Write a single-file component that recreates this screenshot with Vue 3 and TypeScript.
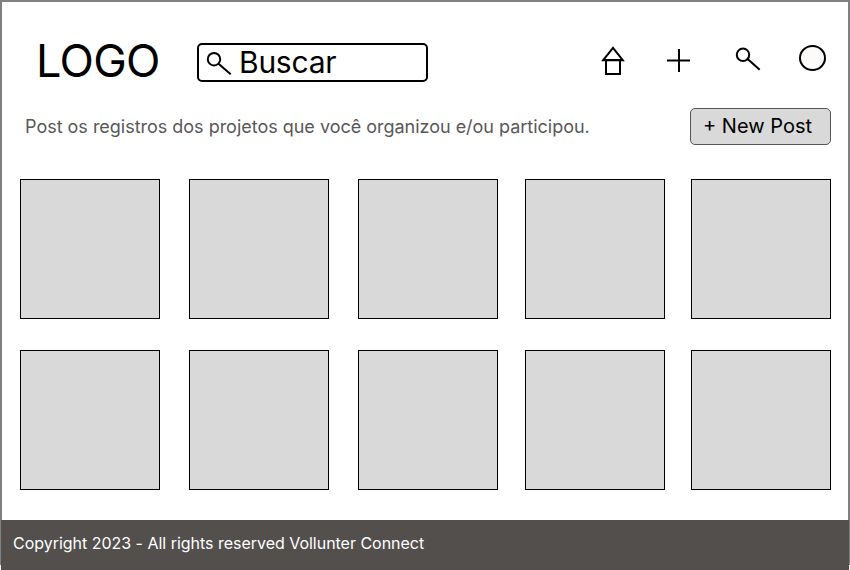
<script setup lang="ts">
interface Post {
  id: number
}

const posts: Post[] = Array.from({ length: 10 }, (_, i) => ({ id: i + 1 }))
</script>

<template>
  <div class="page">
    <div class="frame">
      <header class="header">
        <div class="logo">LOGO</div>
        <label class="search">
          <svg class="search-icon" width="28" height="28" viewBox="0 0 28 28">
            <circle cx="9" cy="9.2" r="6.2" />
            <path d="M13.5 13.7L25.7 24.3" />
          </svg>
          <span class="search-text">Buscar</span>
        </label>
        <nav class="nav">
          <svg width="24" height="32" viewBox="0 0 24 32">
            <path d="M2.2 15.2L12 2.8L21.8 15.2Z" />
            <path d="M5 15H19V29H5Z" />
          </svg>
          <svg width="24" height="32" viewBox="0 0 24 32">
            <path d="M12 4V27M0 15.5H23" />
          </svg>
          <svg width="28" height="32" viewBox="0 0 28 32">
            <circle cx="9" cy="9.8" r="6.2" />
            <path d="M13.6 14L25.7 24.8" />
          </svg>
          <svg width="28" height="32" viewBox="0 0 28 32">
            <ellipse class="avatar" cx="13.5" cy="13" rx="12.5" ry="12" />
          </svg>
        </nav>
      </header>
      <section class="intro">
        <p class="intro-text">Post os registros dos projetos que você organizou e/ou participou.</p>
        <button class="new-post" type="button">+ New Post</button>
      </section>
      <main class="grid">
        <div v-for="post in posts" :key="post.id" class="card"></div>
      </main>
      <footer class="footer">Copyright 2023 - All rights reserved Vollunter Connect</footer>
    </div>
  </div>
</template>

<style>
body {
  margin: 0;
  background: #fff;
}
</style>

<style scoped>
.page {
  width: 850px;
  height: 570px;
  background: #fff;
  color: #000;
  font-family: Inter, sans-serif;
}

.frame {
  box-sizing: border-box;
  height: 565px;
  border: 2px solid #808080;
  border-bottom: 0;
}

.header {
  display: flex;
  height: 106px;
  align-items: flex-start;
}

.logo {
  width: 161px;
  margin-left: 34px;
  padding-top: 32px;
  font-size: 45px;
  line-height: 54px;
  letter-spacing: -0.7px;
  box-sizing: border-box;
  white-space: nowrap;
}

.search {
  display: flex;
  box-sizing: border-box;
  width: 231px;
  height: 39px;
  margin-top: 41px;
  padding-left: 6px;
  border: 2px solid #000;
  border-radius: 5px;
}

.search-icon {
  margin-top: 5px;
}

.search-text {
  margin-left: 6px;
  font-size: 30px;
  line-height: 35px;
  letter-spacing: -0.25px;
}

svg {
  display: block;
  flex: none;
  fill: none;
  stroke: #000;
  stroke-width: 2;
}

.nav {
  display: grid;
  grid-template-columns: 66px 67px 65px 28px;
  margin: 43px 0 0 173px;
}

.avatar {
  fill: #fcfbf9;
}

.intro {
  display: flex;
  justify-content: space-between;
  height: 37px;
  padding: 0 17px 0 23px;
}

.intro-text {
  margin: 0;
  color: #585858;
  font-size: 18px;
  line-height: 37px;
  letter-spacing: -0.015px;
  white-space: nowrap;
}

.new-post {
  box-sizing: border-box;
  width: 141px;
  height: 37px;
  padding: 0 0 0 12px;
  border: 1px solid #555;
  border-radius: 5px;
  background: #d9d9d9;
  color: #000;
  font: 20px/35px Inter, sans-serif;
  text-align: left;
  white-space: nowrap;
}

.grid {
  display: grid;
  grid-template-columns: 169px 169px 167px 166px 140px;
  grid-template-rows: 140px 140px;
  row-gap: 31px;
  padding: 34px 0 30px 18px;
}

.card {
  box-sizing: border-box;
  width: 140px;
  height: 140px;
  border: 1px solid #000;
  background: #d9d9d9;
}

.footer {
  box-sizing: border-box;
  height: 50px;
  margin: 0 -1px;
  padding-left: 12px;
  background: #534f4d;
  color: #fff;
  font-size: 16px;
  line-height: 47px;
  letter-spacing: -0.02px;
}
</style>
